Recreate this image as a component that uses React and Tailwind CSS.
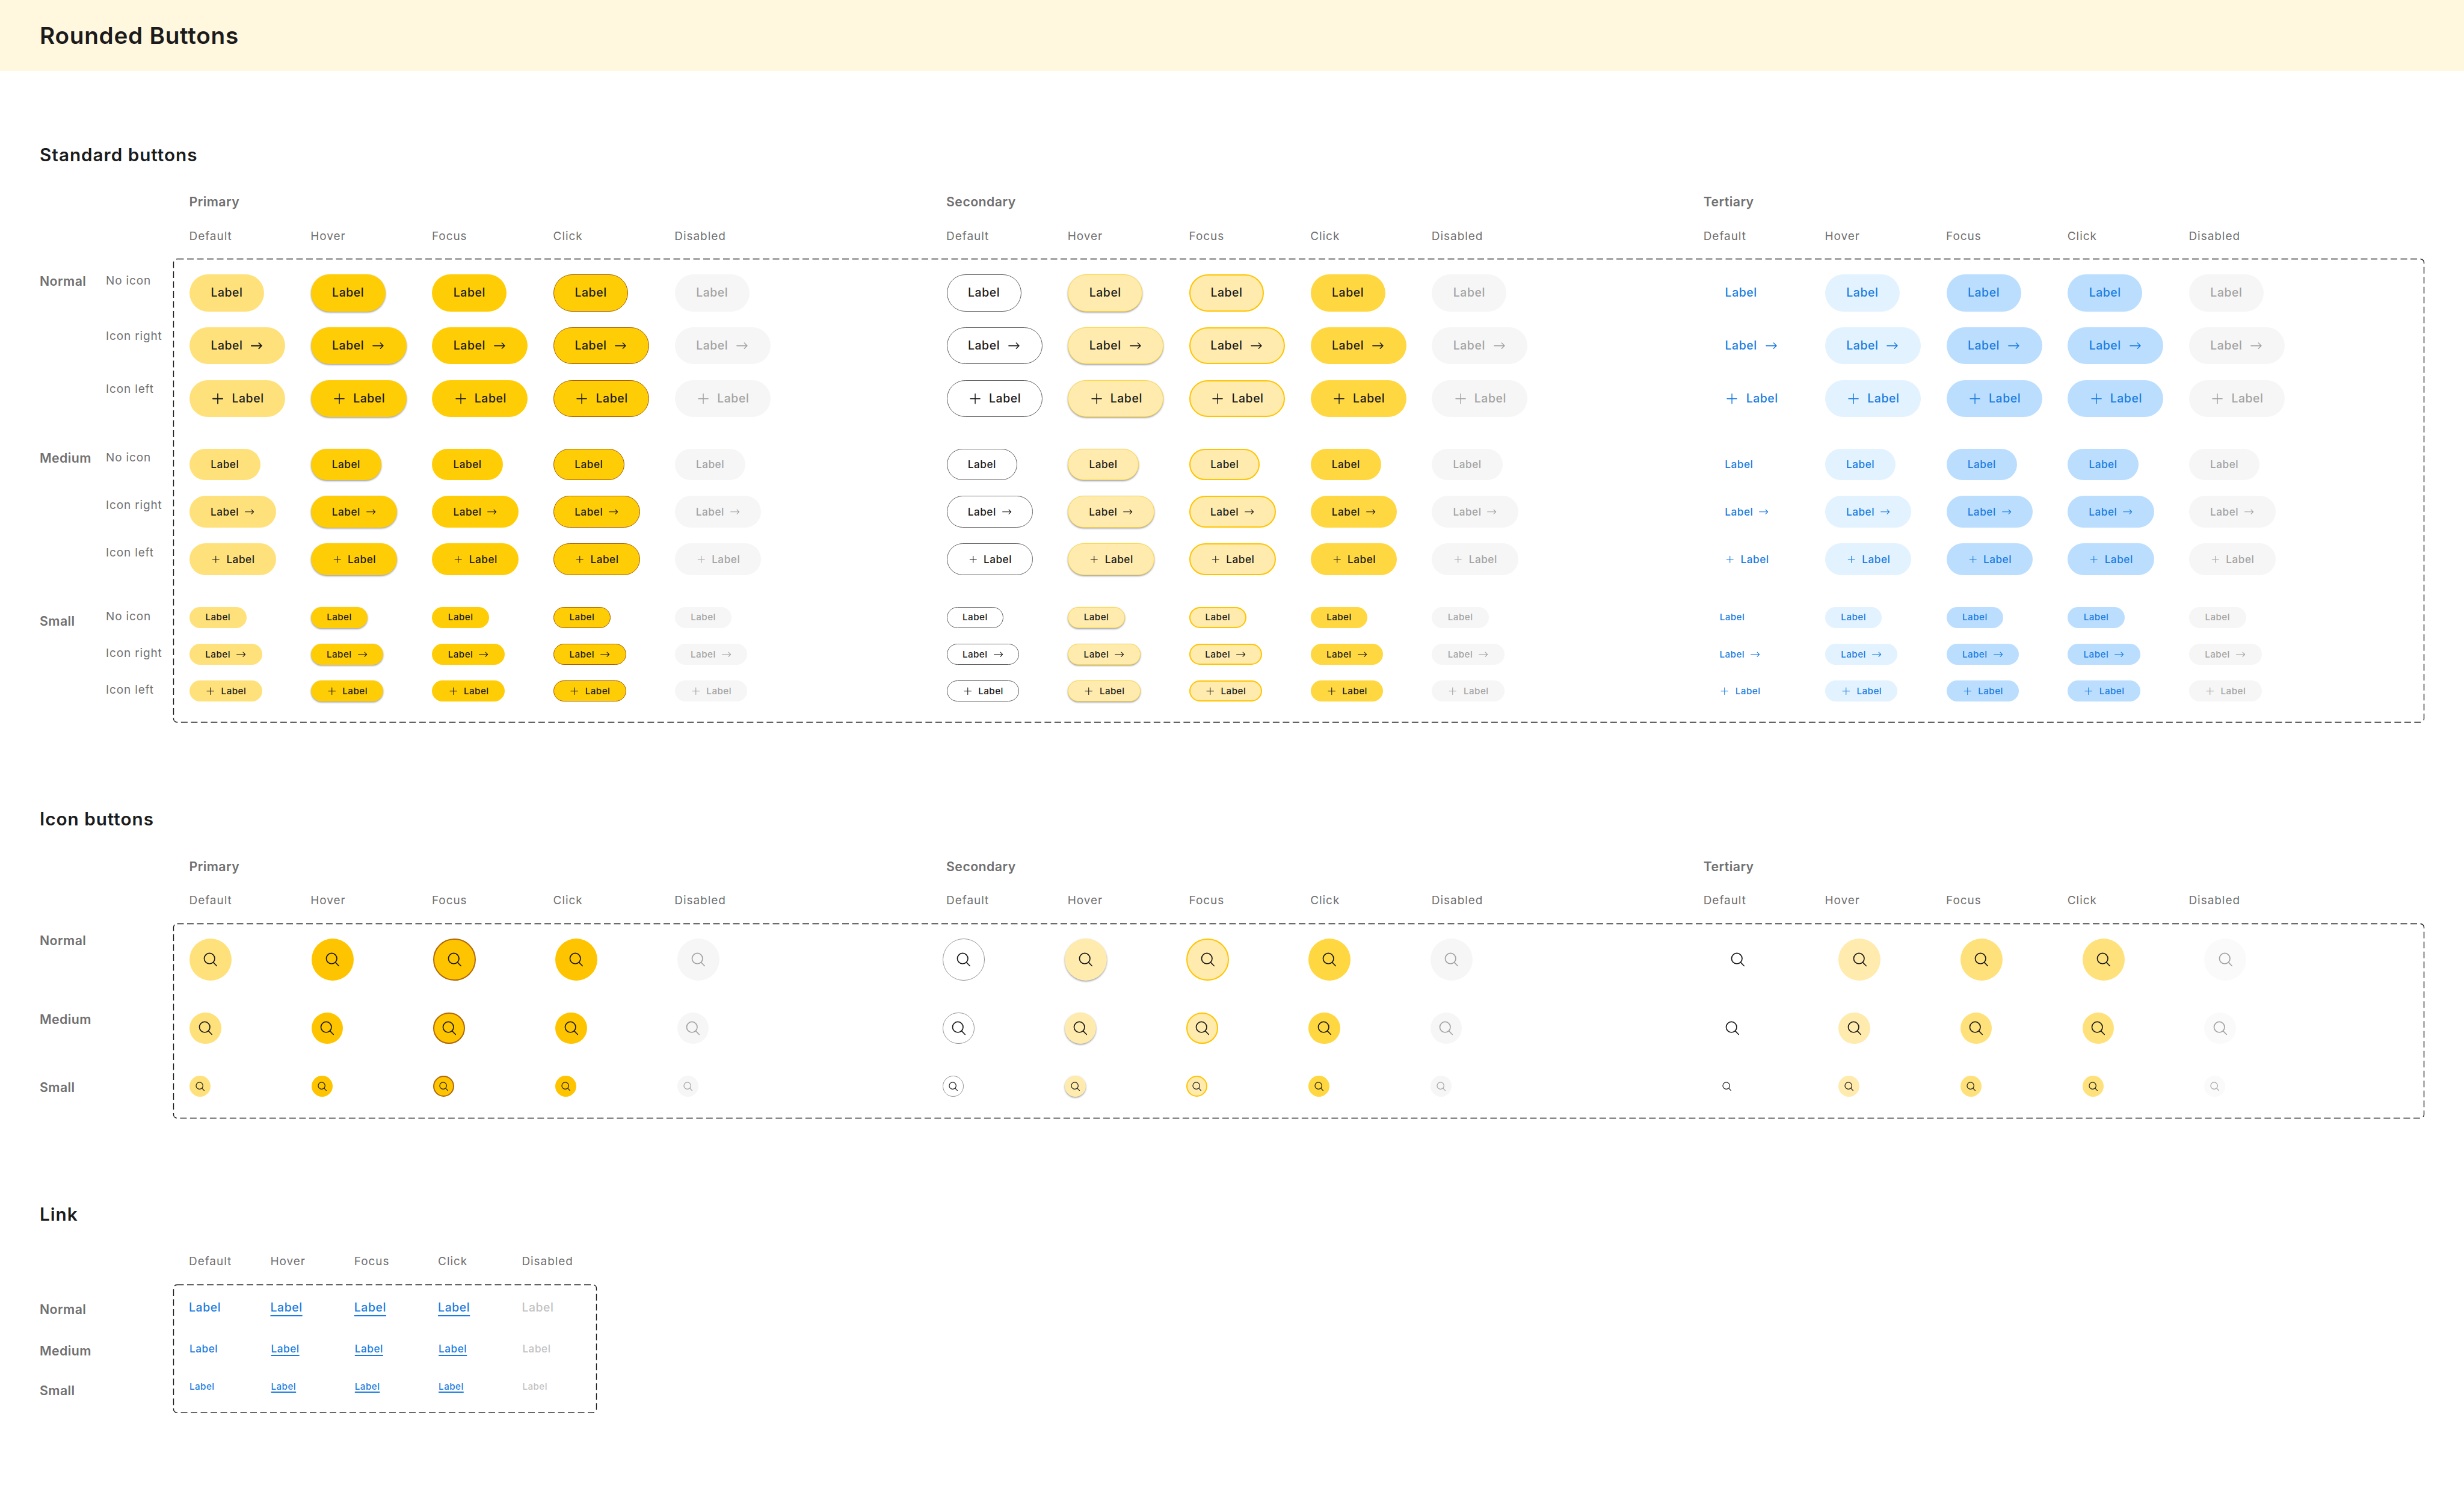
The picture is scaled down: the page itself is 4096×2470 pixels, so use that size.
import React from "react";

const states = ["Default", "Hover", "Focus", "Click", "Disabled"];

const variants = [
  {
    name: "Primary",
    buttons: [
      "bg-[#ffe17b] text-[#1b1b1b]",
      "bg-[#ffcd05] text-[#1b1b1b] shadow-[0_1.5px_3px_rgba(0,0,0,0.4)]",
      "bg-[#ffcd05] text-[#1b1b1b]",
      "bg-[#ffcd05] text-[#1b1b1b] border border-[#a65f00]",
      "bg-[#f6f6f6] text-[#a3a3a3]",
    ],
    icons: [
      "bg-[#ffe17b] text-[#1b1b1b]",
      "bg-[#ffc400] text-[#1b1b1b]",
      "bg-[#ffc400] text-[#1b1b1b] border-2 border-[#b0680a]",
      "bg-[#ffc400] text-[#1b1b1b]",
      "bg-[#f6f6f6] text-[#a3a3a3]",
    ],
  },
  {
    name: "Secondary",
    buttons: [
      "bg-white text-[#1b1b1b] border border-[#616161]",
      "bg-[#ffebad] text-[#1b1b1b] border border-[#ffd740] shadow-[0_1.5px_3px_rgba(0,0,0,0.4)]",
      "bg-[#ffebad] text-[#1b1b1b] border-2 border-[#ffc400]",
      "bg-[#ffd740] text-[#1b1b1b]",
      "bg-[#f6f6f6] text-[#a3a3a3]",
    ],
    icons: [
      "bg-white text-[#1b1b1b] border border-[#949494]",
      "bg-[#ffebad] text-[#1b1b1b] shadow-[0_1.5px_3px_rgba(0,0,0,0.4)]",
      "bg-[#ffebad] text-[#1b1b1b] border-2 border-[#ffc400]",
      "bg-[#ffd740] text-[#1b1b1b]",
      "bg-[#f6f6f6] text-[#a3a3a3]",
    ],
  },
  {
    name: "Tertiary",
    buttons: [
      "text-[#1a7ce0]",
      "bg-[#e2f2ff] text-[#1a7ce0]",
      "bg-[#bbdeff] text-[#1a7ce0]",
      "bg-[#bbdeff] text-[#1a7ce0]",
      "bg-[#f6f6f6] text-[#a3a3a3]",
    ],
    icons: [
      "text-[#1b1b1b]",
      "bg-[#ffebad] text-[#1b1b1b]",
      "bg-[#ffe17b] text-[#1b1b1b]",
      "bg-[#ffe17b] text-[#1b1b1b]",
      "bg-[#fafafa] text-[#a3a3a3]",
    ],
  },
];

const sizes = {
  normal: {
    button: "h-[61.4px]",
    plain: "w-[124px]",
    withIcon: "w-[159px]",
    label: "w-[53.4px] text-[19.4px]",
    gap: "gap-[11.7px]",
    icon: "size-[23.4px]",
    circle: "size-[70.2px]",
    search: "size-[23.4px]",
    searchStroke: 2.3,
    row: "h-[70.2px]",
    arrow: "M4 16H27.3M21 9.7L27.3 16L21 22.3",
    plus: "M16.5 5V27M5.5 16H27.5",
  },
  medium: {
    button: "h-[52.6px]",
    plain: "w-[117.5px]",
    withIcon: "w-[143.6px]",
    label: "w-[47.3px] text-[17.2px]",
    gap: "gap-[8.8px]",
    icon: "size-[17.5px]",
    circle: "size-[52.6px]",
    search: "size-[23.4px]",
    searchStroke: 2.3,
    row: "h-[52.6px]",
    arrow: "M3 16H28.5M22 9.5L28.5 16L22 22.5",
    plus: "M16 6V26M6 16H26",
  },
  small: {
    button: "h-[35.1px]",
    plain: "w-[94.6px]",
    withIcon: "w-[120.6px]",
    label: "w-[42px] text-[15.2px]",
    gap: "gap-[8.8px]",
    icon: "size-[17.5px]",
    circle: "size-[35.1px]",
    search: "size-[15.2px]",
    searchStroke: 2.6,
    row: "h-[35.1px]",
    arrow: "M3 16H28.5M22 9.5L28.5 16L22 22.5",
    plus: "M16 5.5V26.5M5.5 16H26.5",
  },
};

const Glyph = ({ d, bold, className }) => (
  <svg
    className={`${className} shrink-0`}
    viewBox="0 0 32 32"
    fill="none"
    stroke="currentColor"
    strokeWidth={bold ? 2.6 : 2}
    strokeLinecap="round"
    strokeLinejoin="round"
  >
    <path d={d} />
  </svg>
);

const SearchIcon = ({ stroke, className }) => (
  <svg
    className={`${className} shrink-0`}
    viewBox="0 0 32 32"
    fill="none"
    stroke="currentColor"
    strokeWidth={stroke}
    strokeLinecap="round"
  >
    <circle cx="14" cy="14" r="12" />
    <path d="M22.6 22.8L30.4 30.8" />
  </svg>
);

const Button = ({ size, icon, bold, tone }) => {
  const s = sizes[size];
  return (
    <button
      className={`flex items-center justify-center rounded-full font-medium ${s.button} ${s.gap} ${icon ? s.withIcon : s.plain} ${tone}`}
    >
      {icon === "left" && <Glyph d={s.plus} bold={bold} className={s.icon} />}
      <span className={`${s.label} text-center tracking-[0.03em] leading-none`}>
        Label
      </span>
      {icon === "right" && <Glyph d={s.arrow} bold={bold} className={s.icon} />}
    </button>
  );
};

const IconButton = ({ size, tone }) => (
  <button
    className={`flex items-center justify-center rounded-full ${sizes[size].circle} ${tone}`}
  >
    <SearchIcon stroke={sizes[size].searchStroke} className={sizes[size].search} />
  </button>
);

const DashedBox = ({ className, children }) => (
  <div className={`relative ${className}`}>
    <svg className="absolute inset-0 h-full w-full overflow-visible">
      <rect
        x="-0.5"
        y="0.5"
        width="100%"
        height="100%"
        rx="6"
        fill="none"
        stroke="#1b1b1b"
        strokeWidth="1.4"
        strokeDasharray="11 5.5"
      />
    </svg>
    {children}
  </div>
);

const SectionTitle = ({ children }) => (
  <h2 className="ml-[66px] text-[29.7px] tracking-[0.033em] leading-[40px] font-semibold text-[#1b1b1b]">
    {children}
  </h2>
);

const StateNames = ({ className }) => (
  <div className={`grid text-[19px] tracking-[0.05em] leading-[28px] ${className}`}>
    {states.map((state) => (
      <span key={state}>{state}</span>
    ))}
  </div>
);

const VariantHeader = () => (
  <div className="ml-[314.5px] flex">
    {variants.map((variant) => (
      <div key={variant.name} className="w-[1258.6px] shrink-0">
        <h3 className="mt-[44.4px] text-[21.3px] tracking-[0.02em] leading-[28px] font-semibold">
          {variant.name}
        </h3>
        <StateNames className="mt-[29.2px] grid-cols-[repeat(5,201.7px)]" />
      </div>
    ))}
  </div>
);

const SizeNames = ({ className, mediumGap, smallGap }) => (
  <div
    className={`flex flex-col text-[21.3px] tracking-[0.02em] leading-[28px] font-semibold ${className}`}
  >
    <span>Normal</span>
    <span className={mediumGap}>Medium</span>
    <span className={smallGap}>Small</span>
  </div>
);

const StandardButtons = () => (
  <section>
    <SectionTitle>Standard buttons</SectionTitle>
    <VariantHeader />
    <div className="mt-[23.8px] flex">
      <SizeNames
        className="w-[176px] pl-[66px] pt-[22.5px]"
        mediumGap="mt-[265.7px]"
        smallGap="mt-[243.4px]"
      />
      <div className="flex w-[113px] flex-col pt-[22.5px] text-[19px] tracking-[0.045em] leading-[28px] whitespace-nowrap">
        <span>No icon</span>
        <span className="mt-[64.3px]">Icon right</span>
        <span className="mt-[60.1px]">Icon left</span>
        <span className="mt-[85.4px]">No icon</span>
        <span className="mt-[51.3px]">Icon right</span>
        <span className="mt-[50.9px]">Icon left</span>
        <span className="mt-[77.8px]">No icon</span>
        <span className="mt-[33.2px]">Icon right</span>
        <span className="mt-[33.1px]">Icon left</span>
      </div>
      <DashedBox className="flex h-[770px] w-[3741px] pl-[26px] pt-[25.8px]">
        {variants.map((variant) => (
          <div
            key={variant.name}
            className="flex w-[1258.6px] shrink-0 flex-col gap-[52.6px]"
          >
            {["normal", "medium", "small"].map((size) => (
              <div key={size} className="flex flex-col gap-[26.3px]">
                {["none", "right", "left"].map((icon) => (
                  <div key={icon} className="grid grid-cols-[repeat(5,201.7px)]">
                    {variant.buttons.map((tone, i) => (
                      <Button
                        key={i}
                        size={size}
                        icon={icon === "none" ? null : icon}
                        bold={variant.name === "Primary" && size === "normal" && i === 0}
                        tone={tone}
                      />
                    ))}
                  </div>
                ))}
              </div>
            ))}
          </div>
        ))}
      </DashedBox>
    </div>
  </section>
);

const iconGroupWidths = ["w-[1252px]", "w-[1286.5px]", "w-[1100px]"];

const IconButtons = () => (
  <section>
    <SectionTitle>Icon buttons</SectionTitle>
    <VariantHeader />
    <div className="mt-[23.8px] flex">
      <SizeNames
        className="w-[289px] pl-[66px] pt-[14.8px]"
        mediumGap="mt-[102.6px]"
        smallGap="mt-[85.1px]"
      />
      <DashedBox className="flex h-[323px] w-[3741px] pl-[26px] pt-[25.5px]">
        {variants.map((variant, v) => (
          <div
            key={variant.name}
            className={`flex shrink-0 flex-col gap-[52.6px] ${iconGroupWidths[v]}`}
          >
            {["normal", "medium", "small"].map((size) => (
              <div
                key={size}
                className={`grid grid-cols-[repeat(5,202.7px)] ${sizes[size].row}`}
              >
                {variant.icons.map((tone, i) => (
                  <IconButton key={i} size={size} tone={tone} />
                ))}
              </div>
            ))}
          </div>
        ))}
      </DashedBox>
    </div>
  </section>
);

const linkRows = [
  { text: "text-[19.4px]", line: "underline-offset-[5.5px]", row: "" },
  { text: "text-[17.2px]", line: "underline-offset-[3.5px]", row: "mt-[40.4px] pl-px" },
  { text: "text-[15.2px]", line: "underline-offset-[2.5px]", row: "mt-[35.1px] pl-px" },
];

const Links = () => (
  <section>
    <SectionTitle>Link</SectionTitle>
    <StateNames className="ml-[314px] mt-[44.6px] grid-cols-[135.5px_139.3px_139.3px_139.3px_auto]" />
    <div className="mt-[23.8px] flex">
      <SizeNames
        className="w-[289px] pl-[66px] pt-[26.9px]"
        mediumGap="mt-[41.7px]"
        smallGap="mt-[37.7px]"
      />
      <DashedBox className="h-[212.7px] w-[703px] pl-[25px] pt-[24.7px]">
        {linkRows.map(({ text, line, row }) => (
          <div
            key={text}
            className={`grid grid-cols-[135.5px_139.3px_139.3px_139.3px_auto] font-medium tracking-[0.03em] leading-[28px] text-[#1a7ce0] ${text} ${row}`}
          >
            <a>Label</a>
            {["hover", "focus", "click"].map((state) => (
              <a key={state}>
                <span
                  className={`underline decoration-[1.5px] [text-decoration-skip-ink:none] ${line}`}
                >
                  Label
                </span>
              </a>
            ))}
            <a className="text-[#c2c2c2]">Label</a>
          </div>
        ))}
      </DashedBox>
    </div>
  </section>
);

const App = () => {
  return (
    <div className="h-[2470px] w-[4096px] overflow-hidden bg-white font-['Inter',sans-serif] text-[#707070]">
      <header className="flex h-[118px] items-center bg-[#fff7de] pl-[66px]">
        <h1 className="text-[38.7px] tracking-[0.019em] leading-none font-semibold text-[#1b1b1b]">
          Rounded Buttons
        </h1>
      </header>
      <main className="flex flex-col gap-[140.8px] pt-[119px]">
        <StandardButtons />
        <IconButtons />
        <Links />
      </main>
    </div>
  );
};

export default App;
